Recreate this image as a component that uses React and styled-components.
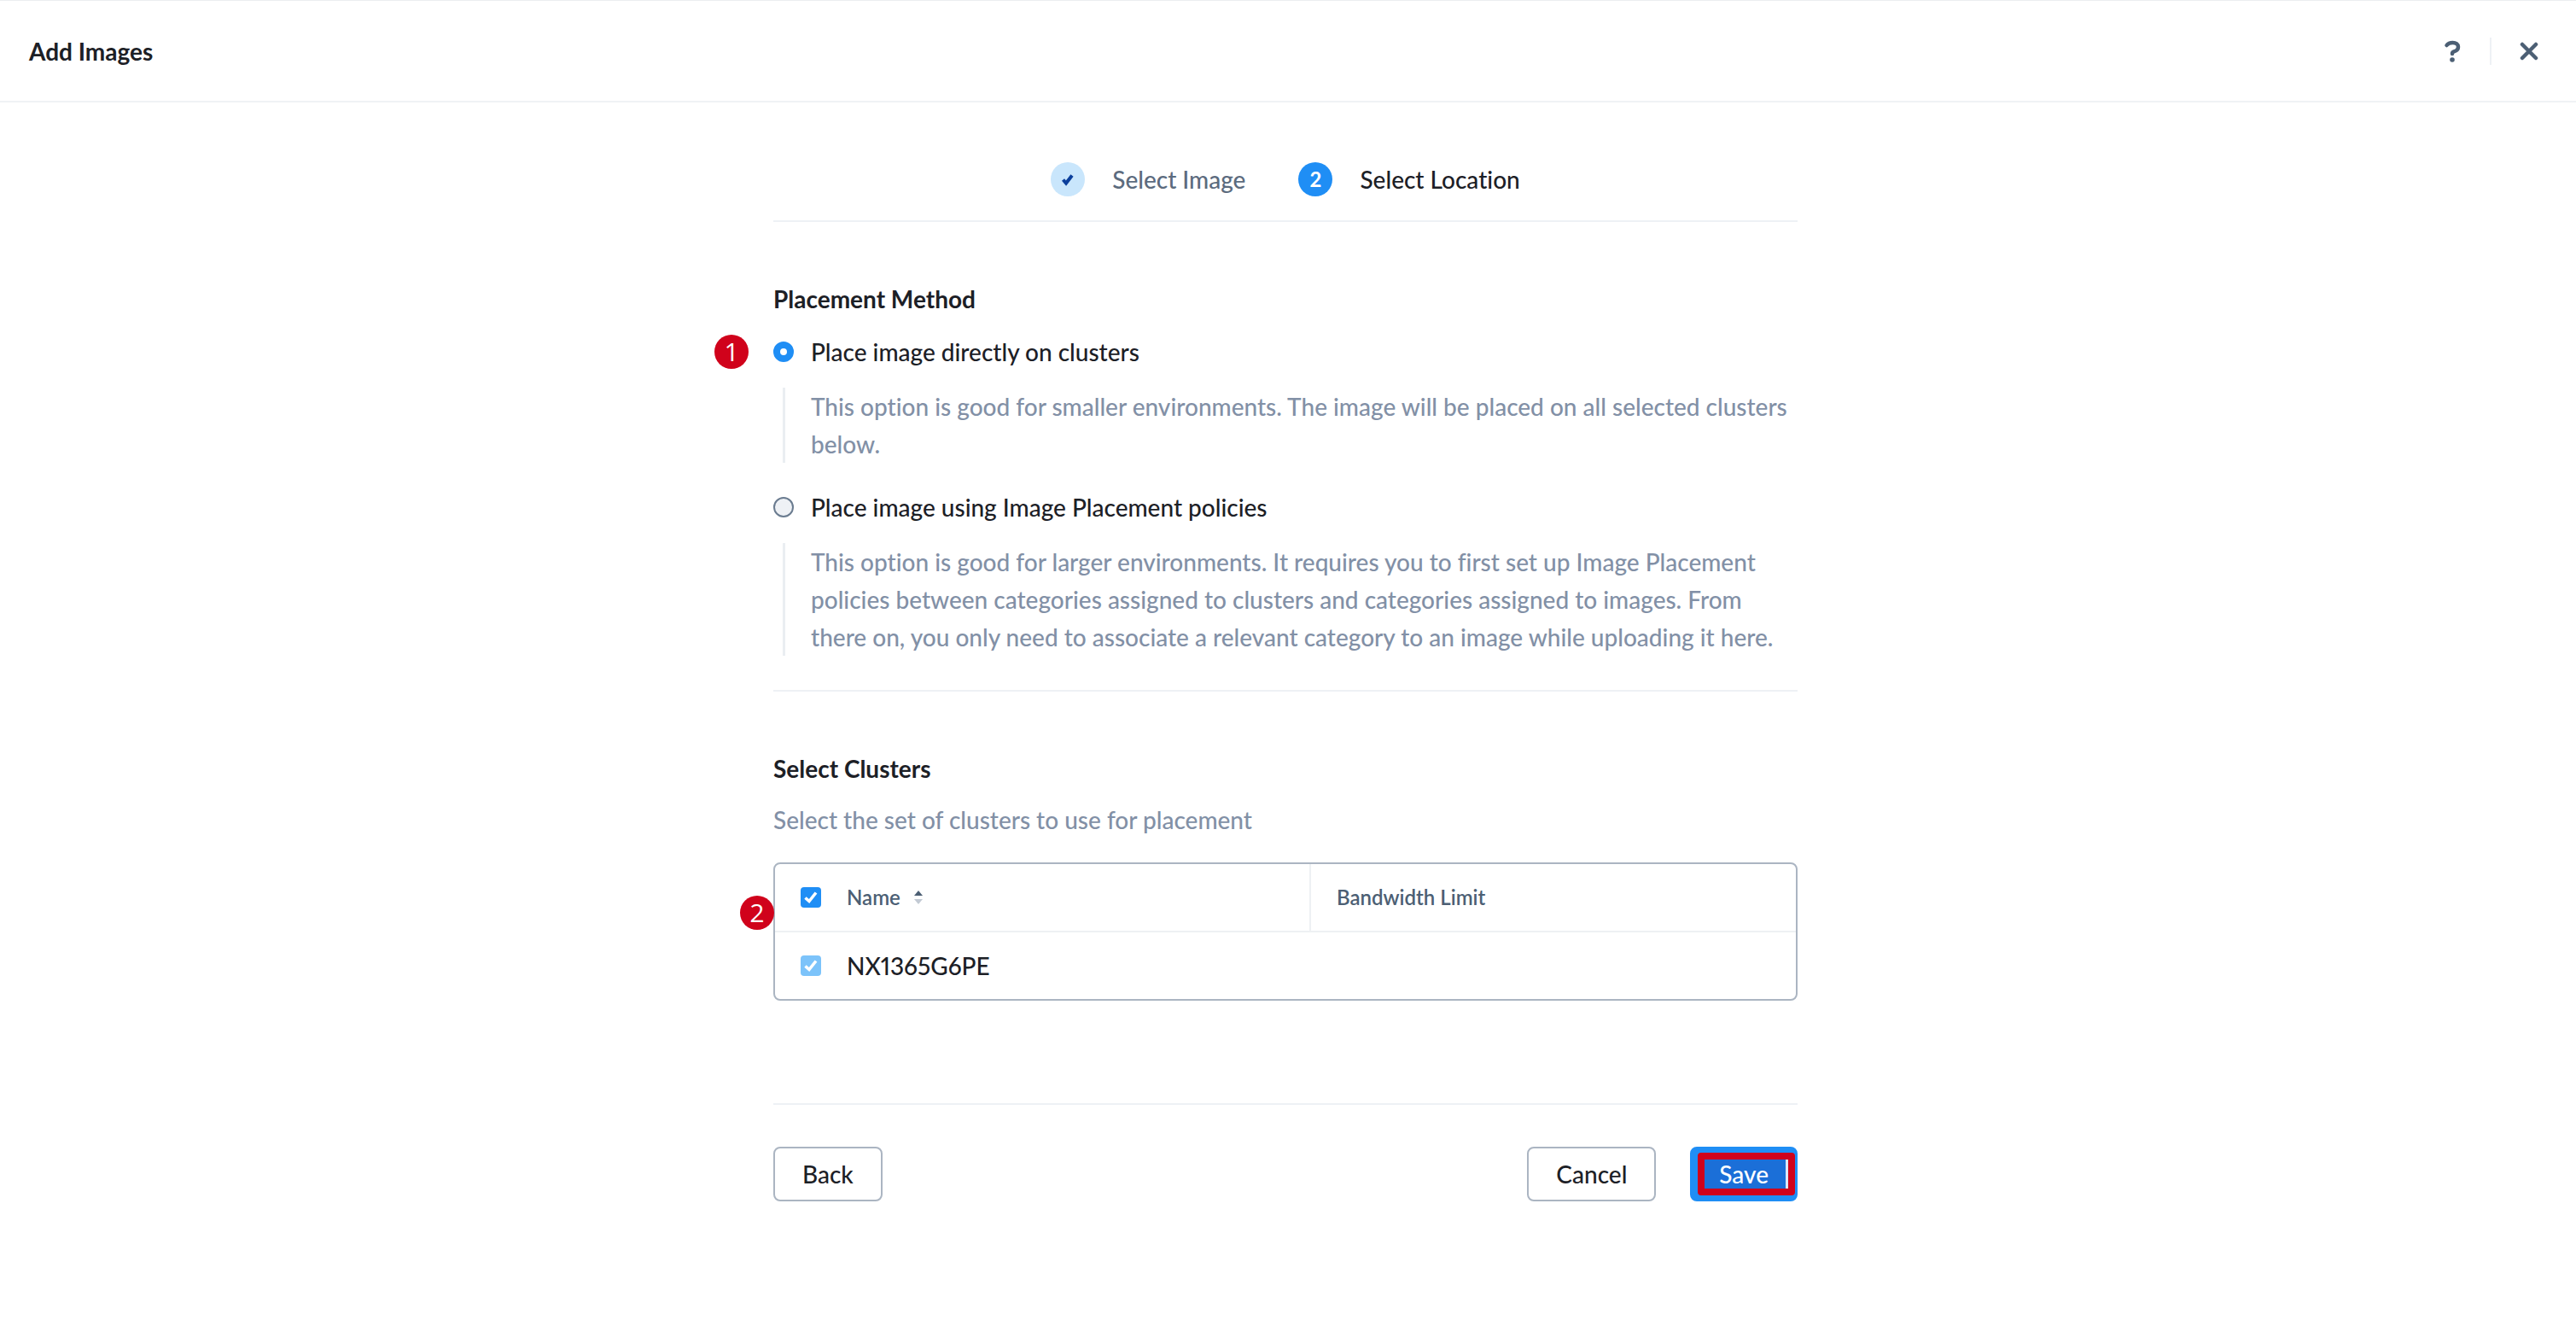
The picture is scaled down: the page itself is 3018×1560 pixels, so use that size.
import { useState } from "react";
import styled, { createGlobalStyle } from "styled-components";

const GlobalStyle = createGlobalStyle`
  * {
    box-sizing: border-box;
  }
  body {
    margin: 0;
    background-color: #ffffff;
    color: #1c2026;
    font-family: Lato, "Open Sans", sans-serif;
    font-size: 28px;
    font-weight: 500;
    line-height: 44px;
    font-variant-ligatures: none;
    font-variant-numeric: proportional-nums;
  }
  button,
  input {
    font: inherit;
    margin: 0;
  }
`;

const Header = styled.header`
  display: flex;
  align-items: center;
  justify-content: space-between;
  height: 120px;
  padding: 0 34px;
  border-top: 1px solid #eceef0;
  border-bottom: 2px solid #f0f2f5;
`;
const Title = styled.h1`
  margin: 0;
  font-size: 28px;
  font-weight: 700;
`;
const HeaderActions = styled.div`
  display: flex;
  align-items: center;
  gap: 23px;
`;
const IconButton = styled.button`
  display: grid;
  place-items: center;
  width: 42px;
  height: 42px;
  padding: 0;
  border: none;
  background: none;
  color: #4c5f74;
  cursor: pointer;
`;
const Separator = styled.span`
  width: 2px;
  height: 32px;
  background-color: #eef1f5;
`;

const Page = styled.main`
  max-width: 1206px;
  margin: 0 auto;
  padding-right: 6px;
`;
const Steps = styled.ol`
  display: flex;
  justify-content: center;
  gap: 62px;
  margin: 0;
  padding: 68px 0 26px;
  list-style: none;
  border-bottom: 2px solid #eef1f5;
`;
const Step = styled.li`
  display: flex;
  align-items: center;
  gap: 32px;
  color: ${(props) => (props.$current ? "#1c2026" : "#5c6b7e")};
`;
const StepMark = styled.span`
  display: grid;
  place-items: center;
  width: 40px;
  height: 40px;
  border-radius: 50%;
  font-size: 24px;
  font-weight: 700;
  line-height: 40px;
  color: ${(props) => (props.$current ? "#ffffff" : "#0b3f9c")};
  background-color: ${(props) => (props.$current ? "#1f8ef5" : "#c9e6fc")};
`;

const Section = styled.section`
  padding: 68px 0 ${(props) => (props.$last ? "120px" : "40px")};
  border-bottom: 2px solid #eef1f5;
`;
const Heading = styled.h2`
  margin: 0;
  font-size: 28px;
  font-weight: 700;
`;
const Options = styled.div`
  display: grid;
  gap: 30px;
  padding-top: 18px;
`;
const OptionLabel = styled.label`
  position: relative;
  display: flex;
  align-items: center;
  gap: 20px;
`;
const Radio = styled.input`
  appearance: none;
  width: 24px;
  height: 24px;
  border: 2px solid #6b7c90;
  border-radius: 50%;
  background-color: #eef1f5;

  &:checked {
    border: 8px solid #1f8ef5;
    background-color: #ffffff;
  }
`;
const OptionText = styled.p`
  margin: 20px 0 0 11px;
  padding-left: 30px;
  border-left: 3px solid #eaeef2;
  color: #8290a6;
`;
const Callout = styled.span`
  position: absolute;
  top: ${(props) => props.$top};
  left: ${(props) => props.$left};
  display: grid;
  place-items: center;
  width: 40px;
  height: 40px;
  border-radius: 50%;
  background-color: #d0021b;
  color: #ffffff;
  font-family: "Open Sans", sans-serif;
  font-size: 30px;
  line-height: 40px;
`;

const Hint = styled.p`
  margin: 16px 0 28px;
  color: #8290a6;
`;
const TableFrame = styled.div`
  position: relative;
  border: 2px solid #abb5c2;
  border-radius: 8px;
`;
const Table = styled.table`
  width: 100%;
  border-collapse: separate;
  border-spacing: 0;
  table-layout: fixed;

  th,
  td {
    height: 80px;
    padding: 0 0 0 30px;
    text-align: left;
    font-weight: 500;
  }
  td {
    height: 78px;
  }
  th {
    border-bottom: 2px solid #eef1f3;
    color: #4c5f74;
    font-size: 24px;
    font-weight: 600;
  }
  th:first-child,
  td:first-child {
    width: 84px;
  }
  th:nth-child(2),
  td:nth-child(2) {
    width: 542px;
    padding-left: 0;
  }
  th:last-child {
    border-left: 2px solid #eef1f3;
  }
`;
const CheckWrap = styled.span`
  display: grid;
  width: 24px;
  height: 24px;

  input,
  svg {
    grid-area: 1 / 1;
  }
  svg {
    pointer-events: none;
  }
`;
const Checkbox = styled.input`
  appearance: none;
  width: 24px;
  height: 24px;
  border-radius: 4px;
  background-color: ${(props) => (props.disabled ? "#7cc3fa" : "#1f8ef5")};
`;
const SortButton = styled.button`
  display: flex;
  align-items: center;
  gap: 16px;
  padding: 0;
  border: none;
  background: none;
  color: inherit;
`;

const Footer = styled.footer`
  display: flex;
  gap: 40px;
  padding: 49px 0;
`;
const Button = styled.button`
  height: 64px;
  padding: 0 32px;
  border: 2px solid #abb5c2;
  border-radius: 8px;
  background-color: #ffffff;
  color: #1c2026;

  &:first-child {
    margin-right: auto;
  }
`;
const SaveButton = styled(Button)`
  position: relative;
  border-color: #1f8ef5;
  background-color: #1f8ef5;
  color: #ffffff;
`;
const SaveText = styled.span`
  position: relative;
`;
const Highlight = styled.span`
  position: absolute;
  top: 5px;
  left: 7px;
  right: 1px;
  bottom: 5px;
  border: 8px solid #d0021b;
  border-radius: 4px;
  background-color: #1b6fd8;
  box-shadow: inset -3px 0 0 #dbe8fb;
`;

function Check({ disabled, ...rest }) {
  return (
    <CheckWrap>
      <Checkbox type="checkbox" disabled={disabled} {...rest} />
      <svg width="24" height="24" viewBox="0 0 24 24" fill="none">
        <path d="M5.500 12.500l4.500 4 8-10" stroke="#ffffff" strokeWidth="3.600" />
      </svg>
    </CheckWrap>
  );
}

function App() {
  const [method, setMethod] = useState("direct");

  return (
    <>
      <GlobalStyle />
      <Header>
        <Title>Add Images</Title>
        <HeaderActions>
          <IconButton aria-label="Help">
            <svg width="24" height="26" viewBox="0 0 24 26" fill="none">
              <path
                d="M5.500 6C7 4 9.500 3 12.500 3c4 0 6.500 2 6.500 5 0 3.500-2.500 4.600-5 5.400-1.500.5-2 1.200-2 2.600"
                stroke="currentColor"
                strokeWidth="4.500"
                strokeLinecap="round"
              />
              <circle cx="12" cy="23" r="2.800" fill="currentColor" />
            </svg>
          </IconButton>
          <Separator />
          <IconButton aria-label="Close">
            <svg width="22" height="22" viewBox="0 0 22 22" fill="none">
              <path
                d="M3 3l16 16M19 3L3 19"
                stroke="currentColor"
                strokeWidth="4.500"
                strokeLinecap="round"
              />
            </svg>
          </IconButton>
        </HeaderActions>
      </Header>

      <Page>
        <Steps>
          <Step>
            <StepMark>
              <svg width="18" height="16" viewBox="0 0 18 16" fill="none">
                <path
                  d="M3.500 8.500l3.500 4 7-9"
                  stroke="currentColor"
                  strokeWidth="4"
                />
              </svg>
            </StepMark>
            Select Image
          </Step>
          <Step $current>
            <StepMark $current>2</StepMark>
            Select Location
          </Step>
        </Steps>

        <Section>
          <Heading>Placement Method</Heading>
          <Options>
            <div>
              <OptionLabel>
                <Callout $top="2px" $left="-69px">
                  1
                </Callout>
                <Radio
                  type="radio"
                  name="method"
                  checked={method === "direct"}
                  onChange={() => setMethod("direct")}
                />
                Place image directly on clusters
              </OptionLabel>
              <OptionText>
                This option is good for smaller environments. The image will be
                placed on all selected clusters below.
              </OptionText>
            </div>
            <div>
              <OptionLabel>
                <Radio
                  type="radio"
                  name="method"
                  checked={method === "policies"}
                  onChange={() => setMethod("policies")}
                />
                Place image using Image Placement policies
              </OptionLabel>
              <OptionText>
                This option is good for larger environments. It requires you to
                first set up Image Placement policies between categories
                assigned to clusters and categories assigned to images. From
                there on, you only need to associate a relevant category to an
                image while uploading it here.
              </OptionText>
            </div>
          </Options>
        </Section>

        <Section $last>
          <Heading>Select Clusters</Heading>
          <Hint>Select the set of clusters to use for placement</Hint>
          <TableFrame>
            <Callout $top="37px" $left="-41px">
              2
            </Callout>
            <Table>
              <thead>
                <tr>
                  <th>
                    <Check defaultChecked aria-label="Select all clusters" />
                  </th>
                  <th>
                    <SortButton>
                      Name
                      <svg width="10" height="16" viewBox="0 0 10 16">
                        <path d="M0 6l5-6 5 6z" fill="#4c5f74" />
                        <path d="M0 10l5 6 5-6z" fill="#c3cad4" />
                      </svg>
                    </SortButton>
                  </th>
                  <th>Bandwidth Limit</th>
                </tr>
              </thead>
              <tbody>
                <tr>
                  <td>
                    <Check defaultChecked disabled aria-label="NX1365G6PE" />
                  </td>
                  <td>NX1365G6PE</td>
                  <td />
                </tr>
              </tbody>
            </Table>
          </TableFrame>
        </Section>

        <Footer>
          <Button>Back</Button>
          <Button>Cancel</Button>
          <SaveButton>
            <Highlight />
            <SaveText>Save</SaveText>
          </SaveButton>
        </Footer>
      </Page>
    </>
  );
}
export default App;
